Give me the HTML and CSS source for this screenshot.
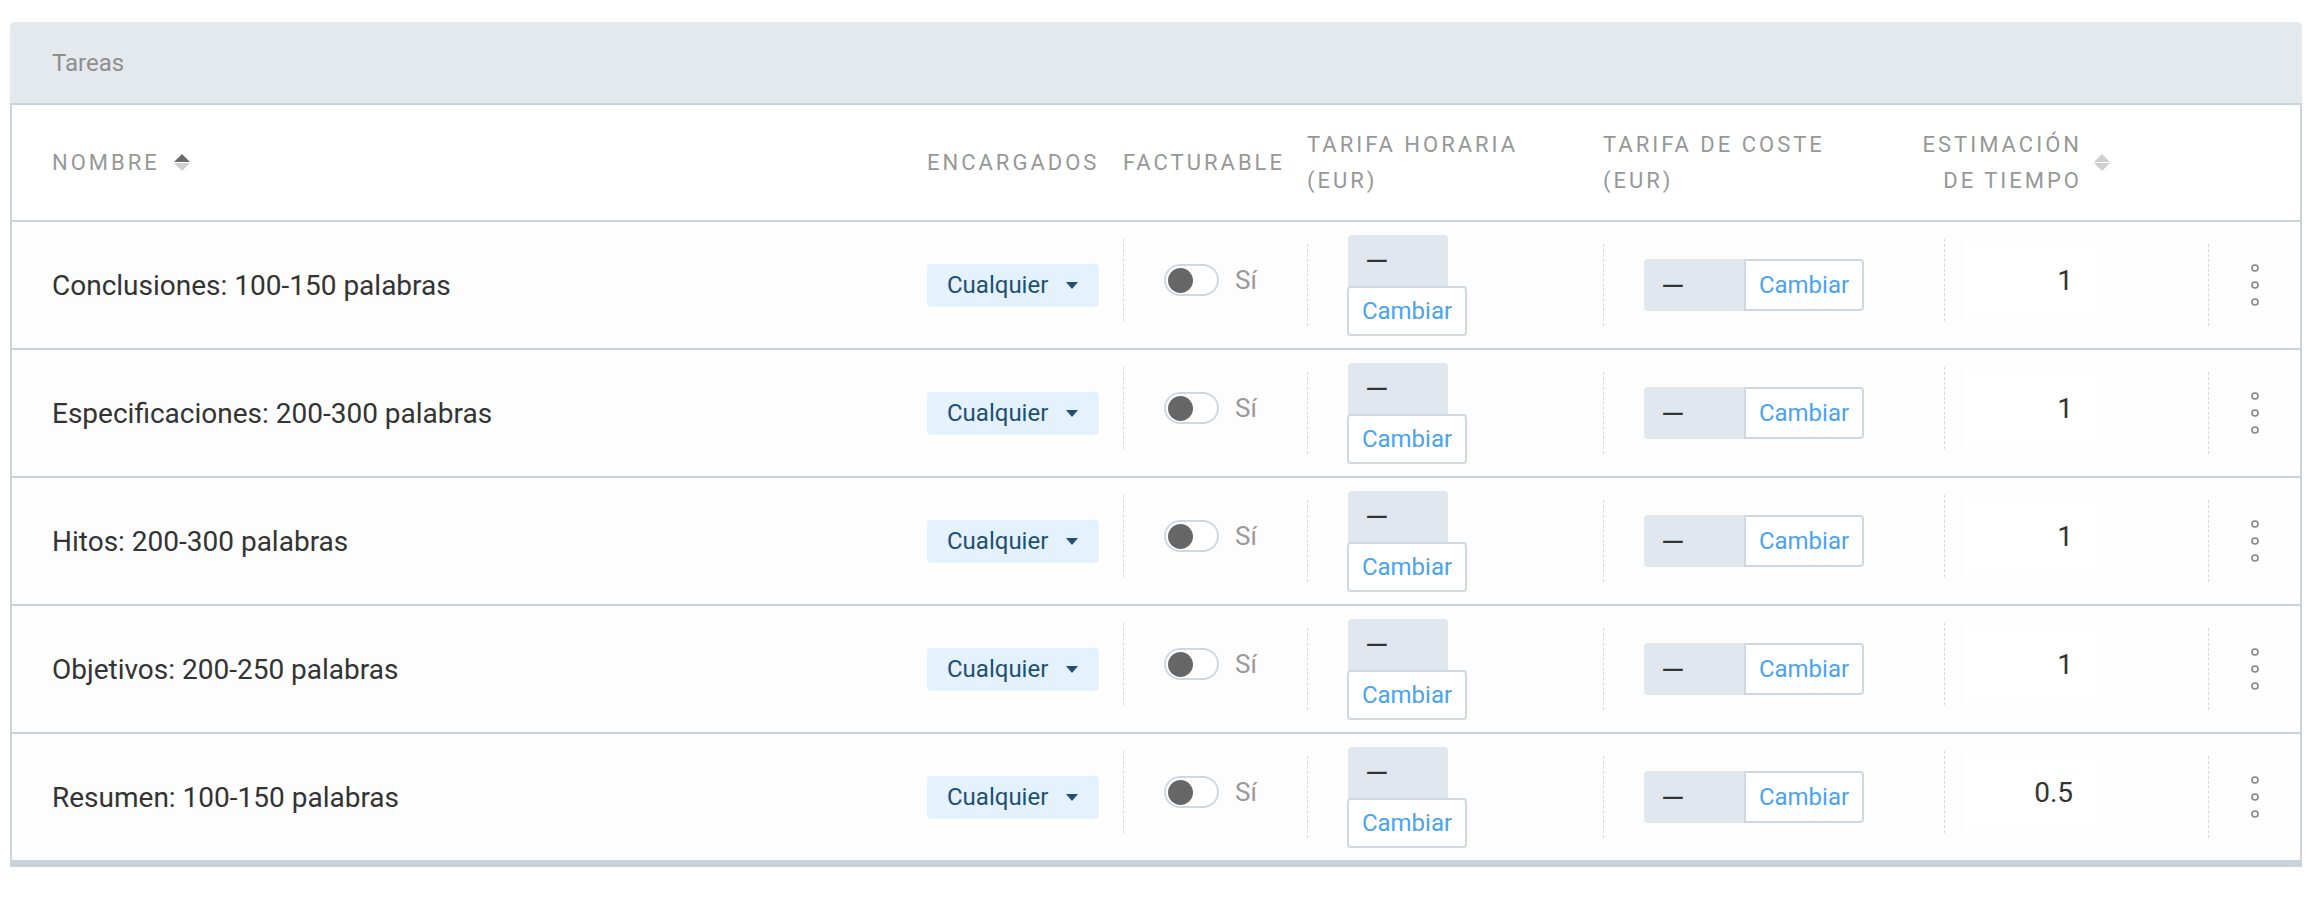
FILE: index.html
```html
<!DOCTYPE html>
<html lang="es">
<head>
    <meta charset="UTF-8">
    <meta name="viewport" content="width=device-width, initial-scale=1.0">
    <title>Tareas</title>
    <link rel="stylesheet" href="styles.css">
</head>
<body>
    <div class="page">
        <div class="panel">
            <div class="panel-heading">Tareas</div>
            <div class="task-table">
                <div class="task-row task-head">
                    <div class="th th-name">
                        <span>Nombre</span>
                        <svg class="sort-icon" width="16" height="17" viewBox="0 0 16 17"><path d="M0 8L8 0l8 8z" fill="#6b6b6b"/><path d="M0 9l8 8 8-8z" fill="#cfcfcf"/></svg>
                    </div>
                    <div class="th">Encargados</div>
                    <div class="th">Facturable</div>
                    <div class="th">Tarifa horaria<br>(EUR)</div>
                    <div class="th">Tarifa de coste<br>(EUR)</div>
                    <div class="th th-estimate">
                        <span>Estimación<br>de tiempo</span>
                        <svg class="sort-icon" width="16" height="17" viewBox="0 0 16 17"><path d="M0 8L8 0l8 8z" fill="#cfcfcf"/><path d="M0 9l8 8 8-8z" fill="#cfcfcf"/></svg>
                    </div>
                    <div class="th"></div>
                </div>

                <div class="task-row">
                    <div class="cell cell-name">Conclusiones: 100-150 palabras</div>
                    <div class="cell"><button class="assignee-button">Cualquier <span class="caret"></span></button></div>
                    <div class="cell cell-sep cell-raised"><span class="switch"><span class="switch-knob"></span></span><span class="switch-label">Sí</span></div>
                    <div class="cell cell-sep"><div class="rate-stack"><span class="rate-value">—</span><button class="change-button">Cambiar</button></div></div>
                    <div class="cell cell-sep"><div class="rate-group"><span class="rate-value">—</span><button class="change-button">Cambiar</button></div></div>
                    <div class="cell cell-sep cell-raised cell-estimate"><input class="estimate-input" type="text" value="1"></div>
                    <div class="cell cell-sep cell-actions"><svg width="10" height="42" viewBox="0 0 10 42"><circle cx="5" cy="4" r="3" fill="none" stroke="#858585" stroke-width="1.6"/><circle cx="5" cy="21" r="3" fill="none" stroke="#858585" stroke-width="1.6"/><circle cx="5" cy="38" r="3" fill="none" stroke="#858585" stroke-width="1.6"/></svg></div>
                </div>

                <div class="task-row">
                    <div class="cell cell-name">Especificaciones: 200-300 palabras</div>
                    <div class="cell"><button class="assignee-button">Cualquier <span class="caret"></span></button></div>
                    <div class="cell cell-sep cell-raised"><span class="switch"><span class="switch-knob"></span></span><span class="switch-label">Sí</span></div>
                    <div class="cell cell-sep"><div class="rate-stack"><span class="rate-value">—</span><button class="change-button">Cambiar</button></div></div>
                    <div class="cell cell-sep"><div class="rate-group"><span class="rate-value">—</span><button class="change-button">Cambiar</button></div></div>
                    <div class="cell cell-sep cell-raised cell-estimate"><input class="estimate-input" type="text" value="1"></div>
                    <div class="cell cell-sep cell-actions"><svg width="10" height="42" viewBox="0 0 10 42"><circle cx="5" cy="4" r="3" fill="none" stroke="#858585" stroke-width="1.6"/><circle cx="5" cy="21" r="3" fill="none" stroke="#858585" stroke-width="1.6"/><circle cx="5" cy="38" r="3" fill="none" stroke="#858585" stroke-width="1.6"/></svg></div>
                </div>

                <div class="task-row">
                    <div class="cell cell-name">Hitos: 200-300 palabras</div>
                    <div class="cell"><button class="assignee-button">Cualquier <span class="caret"></span></button></div>
                    <div class="cell cell-sep cell-raised"><span class="switch"><span class="switch-knob"></span></span><span class="switch-label">Sí</span></div>
                    <div class="cell cell-sep"><div class="rate-stack"><span class="rate-value">—</span><button class="change-button">Cambiar</button></div></div>
                    <div class="cell cell-sep"><div class="rate-group"><span class="rate-value">—</span><button class="change-button">Cambiar</button></div></div>
                    <div class="cell cell-sep cell-raised cell-estimate"><input class="estimate-input" type="text" value="1"></div>
                    <div class="cell cell-sep cell-actions"><svg width="10" height="42" viewBox="0 0 10 42"><circle cx="5" cy="4" r="3" fill="none" stroke="#858585" stroke-width="1.6"/><circle cx="5" cy="21" r="3" fill="none" stroke="#858585" stroke-width="1.6"/><circle cx="5" cy="38" r="3" fill="none" stroke="#858585" stroke-width="1.6"/></svg></div>
                </div>

                <div class="task-row">
                    <div class="cell cell-name">Objetivos: 200-250 palabras</div>
                    <div class="cell"><button class="assignee-button">Cualquier <span class="caret"></span></button></div>
                    <div class="cell cell-sep cell-raised"><span class="switch"><span class="switch-knob"></span></span><span class="switch-label">Sí</span></div>
                    <div class="cell cell-sep"><div class="rate-stack"><span class="rate-value">—</span><button class="change-button">Cambiar</button></div></div>
                    <div class="cell cell-sep"><div class="rate-group"><span class="rate-value">—</span><button class="change-button">Cambiar</button></div></div>
                    <div class="cell cell-sep cell-raised cell-estimate"><input class="estimate-input" type="text" value="1"></div>
                    <div class="cell cell-sep cell-actions"><svg width="10" height="42" viewBox="0 0 10 42"><circle cx="5" cy="4" r="3" fill="none" stroke="#858585" stroke-width="1.6"/><circle cx="5" cy="21" r="3" fill="none" stroke="#858585" stroke-width="1.6"/><circle cx="5" cy="38" r="3" fill="none" stroke="#858585" stroke-width="1.6"/></svg></div>
                </div>

                <div class="task-row">
                    <div class="cell cell-name">Resumen: 100-150 palabras</div>
                    <div class="cell"><button class="assignee-button">Cualquier <span class="caret"></span></button></div>
                    <div class="cell cell-sep cell-raised"><span class="switch"><span class="switch-knob"></span></span><span class="switch-label">Sí</span></div>
                    <div class="cell cell-sep"><div class="rate-stack"><span class="rate-value">—</span><button class="change-button">Cambiar</button></div></div>
                    <div class="cell cell-sep"><div class="rate-group"><span class="rate-value">—</span><button class="change-button">Cambiar</button></div></div>
                    <div class="cell cell-sep cell-raised cell-estimate"><input class="estimate-input" type="text" value="0.5"></div>
                    <div class="cell cell-sep cell-actions"><svg width="10" height="42" viewBox="0 0 10 42"><circle cx="5" cy="4" r="3" fill="none" stroke="#858585" stroke-width="1.6"/><circle cx="5" cy="21" r="3" fill="none" stroke="#858585" stroke-width="1.6"/><circle cx="5" cy="38" r="3" fill="none" stroke="#858585" stroke-width="1.6"/></svg></div>
                </div>
            </div>
        </div>
    </div>
</body>
</html>
```

FILE: styles.css
```css
body {
    margin: 0;
    background-color: #fff;
    font-family: Roboto, "Liberation Sans", sans-serif;
    color: #333;
}
.page {
    padding: 22px 22px 0 10px;
}
.panel-heading {
    height: 81px;
    display: flex;
    align-items: center;
    padding-left: 42px;
    background-color: #e4e9ee;
    border-bottom: 2px solid #cbd4dd;
    border-radius: 5px 5px 0 0;
    font-size: 24px;
    color: #8e8e8e;
}
.task-table {
    border-left: 2px solid #cbd4dd;
    border-right: 2px solid #cbd4dd;
    border-bottom: 7px solid #c9d1d9;
}
.task-row {
    display: grid;
    grid-template-columns: 1fr 196px 184px 296px 341px 264px 92px;
    height: 126px;
    border-bottom: 2px solid #cbd4dd;
    background-color: #fdfdfd;
}
.task-row:last-child {
    border-bottom: none;
}
.task-head {
    height: 115px;
    background-color: #fff;
}
.th {
    display: flex;
    align-items: center;
    font-size: 22px;
    line-height: 36px;
    letter-spacing: 3px;
    text-transform: uppercase;
    color: #979797;
    white-space: nowrap;
}
.th-name {
    padding-left: 40px;
}
.sort-icon {
    margin-left: 14px;
    flex-shrink: 0;
}
.th-estimate {
    justify-content: flex-end;
    text-align: right;
    padding-right: 98px;
}
.th-estimate .sort-icon {
    margin-left: 12px;
}
.cell {
    display: flex;
    align-items: center;
}
.cell-name {
    padding-left: 40px;
    font-size: 28px;
    color: #333;
}
.cell-sep {
    align-self: center;
    height: 82px;
    padding-left: 40px;
    border-left: 1px dashed #d4d8dc;
}
.cell-raised {
    margin-bottom: 10px;
}
.assignee-button {
    display: inline-flex;
    align-items: center;
    height: 43px;
    padding: 0 21px 0 20px;
    border: none;
    border-radius: 4px;
    background-color: #e3f2fd;
    font-family: inherit;
    font-size: 24px;
    color: #1e4f74;
    cursor: pointer;
}
.caret {
    margin-left: 18px;
    width: 0;
    height: 0;
    border-left: 6px solid transparent;
    border-right: 6px solid transparent;
    border-top: 7px solid #1e4f74;
}
.switch {
    display: inline-flex;
    align-items: center;
    width: 55px;
    height: 32px;
    padding: 0 2px;
    box-sizing: border-box;
    border: 2px solid #cfd8e0;
    border-radius: 16px;
    background-color: #fff;
}
.switch-knob {
    width: 25px;
    height: 25px;
    border-radius: 50%;
    background-color: #666;
}
.switch-label {
    margin-left: 16px;
    font-size: 26px;
    color: #999;
}
.rate-stack {
    display: flex;
    flex-direction: column;
    align-items: flex-start;
}
.rate-value {
    display: flex;
    align-items: center;
    width: 100px;
    height: 51px;
    box-sizing: border-box;
    padding-left: 17px;
    background-color: #e1e7ee;
    font-size: 30px;
    color: #333;
}
.rate-stack .rate-value {
    border-radius: 4px 4px 0 0;
}
.rate-stack .change-button {
    margin-left: -1px;
}
.change-button {
    width: 120px;
    height: 50px;
    padding: 0;
    border: 2px solid #cfd8e0;
    border-radius: 4px;
    background-color: #fff;
    font-family: inherit;
    font-size: 24px;
    color: #4aa3ee;
    cursor: pointer;
}
.rate-group {
    display: flex;
}
.rate-group .rate-value {
    height: 52px;
    border-radius: 4px 0 0 4px;
}
.rate-group .change-button {
    height: 52px;
    border-radius: 0 4px 4px 0;
}
.cell-estimate {
    padding-left: 21px;
}
.estimate-input {
    width: 131px;
    height: 76px;
    box-sizing: border-box;
    padding: 0 24px 0 0;
    border: none;
    background-color: #fff;
    font-family: inherit;
    font-size: 28px;
    color: #333;
    text-align: right;
}
.cell-actions {
    justify-content: center;
    padding-left: 0;
}
```
